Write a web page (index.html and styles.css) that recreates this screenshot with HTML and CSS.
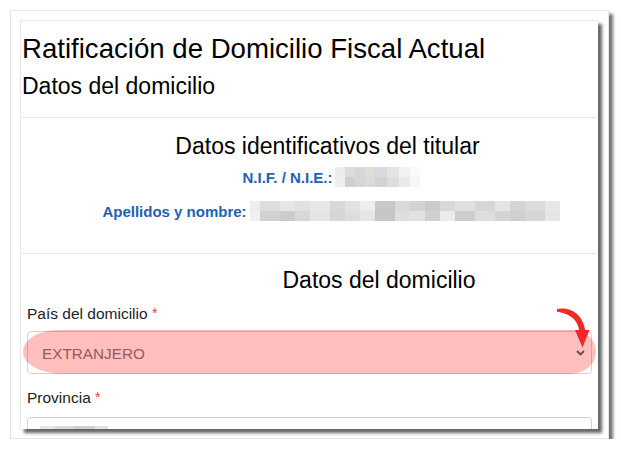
FILE: index.html
```html
<!DOCTYPE html>
<html lang="es">
<head>
<meta charset="utf-8">
<title>Ratificación de Domicilio Fiscal Actual</title>
<link rel="stylesheet" href="styles.css">
</head>
<body>
<div class="frame">
  <div class="panel">
    <header class="head">
      <h1 class="title">Ratificación de Domicilio Fiscal Actual</h1>
      <h2 class="subtitle">Datos del domicilio</h2>
    </header>
    <section class="ident">
      <h3 class="section-title">Datos identificativos del titular</h3>
      <p class="id-line"><span class="id-label">N.I.F. / N.I.E.:</span><span class="blur blur-nif"></span></p>
      <p class="id-line id-line-2"><span class="id-label">Apellidos y nombre:</span><span class="blur blur-name"></span></p>
    </section>
    <section class="address">
      <h3 class="section-title address-title">Datos del domicilio</h3>
      <div class="field">
        <label class="field-label">País del domicilio <span class="req">*</span></label>
        <div class="select">
          <span class="select-value">EXTRANJERO</span>
          <svg class="chevron" width="9" height="6" viewBox="0 0 9 6"><path d="M1 1 L4.5 4.5 L8 1" fill="none" stroke="#555" stroke-width="1.8"/></svg>
        </div>
      </div>
      <div class="field field-2">
        <label class="field-label">Provincia <span class="req">*</span></label>
        <div class="select select-2">
          <span class="blur blur-prov"></span>
        </div>
      </div>
    </section>
    <div class="highlight"></div>
    <svg class="arrow" width="40" height="46" viewBox="0 0 40 46">
      <path d="M2 4 C12 1.5 28 6 30.5 27 L24.5 27 C23 13 13 8.5 2 6.8 Z" fill="#f02828"/>
      <path d="M20 25 L34.5 25 L27.5 42.5 Z" fill="#f02828"/>
    </svg>
  </div>
</div>
</body>
</html>
```

FILE: styles.css
```css
* { box-sizing: border-box; }

body {
  margin: 0;
  background: #ffffff;
  font-family: "Liberation Sans", Arial, sans-serif;
  color: #000;
}

.frame {
  margin: 10px 0 0 10px;
  width: 599px;
  height: 429px;
  background: #fff;
  border: 1px solid #e6e6e6;
  padding: 9px 10px 10px 9px;
  box-shadow: 4px 4px 3px rgba(0, 0, 0, 0.55);
}

.panel {
  position: relative;
  width: 578px;
  height: 409px;
  background: #fff;
  border-top: 1px solid #e8e8e8;
  border-left: 1px solid #e8e8e8;
  box-shadow: 4px 4px 3px rgba(0, 0, 0, 0.6);
  overflow: hidden;
}

.head {
  margin: 0 1px;
  padding: 12.5px 0 17.3px 0;
  border-bottom: 1px solid #e5e5e5;
}

.title {
  margin: 0;
  font-size: 27.6px;
  font-weight: normal;
  line-height: 1.1;
}

.subtitle {
  margin: 10.5px 0 0 0;
  font-size: 23px;
  font-weight: normal;
  line-height: 1.1;
}

.ident {
  margin: 0 1px;
  padding: 16.4px 0 29.2px 36px;
  border-bottom: 1px solid #e5e5e5;
  text-align: center;
}

.section-title {
  margin: 0;
  font-size: 23px;
  font-weight: normal;
  line-height: 1.1;
}

.id-line {
  margin: 7.4px 0 0 0;
  padding-left: 7px;
  font-size: 15px;
  line-height: 22px;
  white-space: nowrap;
}

.id-line-2 { margin-top: 12.4px; }

.id-label {
  font-weight: bold;
  color: #1d62b5;
}

.blur {
  display: inline-block;
  height: 20px;
  vertical-align: -4px;
  margin-left: 2px;
  background-repeat: no-repeat;
  background-size: 100% 50%, 100% 50%;
  background-position: top left, bottom left;
}

.blur-nif {
  width: 85px;
  background-image:
    linear-gradient(90deg, #ececec 0 10px, #dcdcdc 10px 20px, #d4d8da 20px 30px, #e0dcd8 30px 40px, #d8d8de 40px 52px, #e4e4e4 52px 64px, #f2f2f2 64px 75px, #fafafa 75px 85px),
    linear-gradient(90deg, #eeeeee 0 10px, #cfcfcf 10px 20px, #d6d6d6 20px 30px, #dadada 30px 40px, #d2d2d6 40px 52px, #dedede 52px 64px, #eaeaea 64px 75px, #f6f6f6 75px 85px);
}

.blur-name {
  width: 310px;
  margin-left: 3px;
  background-image:
    linear-gradient(90deg, #eeeeee 0 10px, #dedede 10px 30px, #e6e6e6 30px 45px, #dde2e6 45px 60px, #e8e8e8 60px 80px, #d8d8d8 80px 95px, #e2e2e2 95px 110px, #eeeeee 110px 125px, #c8c8c8 125px 145px, #dadad6 145px 160px, #d2d2d8 160px 175px, #cbcbcb 175px 190px, #d8d8d8 190px 205px, #e0e0e0 205px 225px, #d6d6d6 225px 245px, #e4e4e4 245px 260px, #d2d6d2 260px 275px, #dcdcdc 275px 295px, #e8e8e8 295px 310px),
    linear-gradient(90deg, #f0f0f0 0 10px, #d2d2d2 10px 30px, #cccccc 30px 45px, #d8d8d8 45px 60px, #e4e4e4 60px 80px, #d6d6d6 80px 95px, #dddddd 95px 110px, #e6e6e6 110px 125px, #c6c6c6 125px 145px, #dedede 145px 160px, #e2e2e2 160px 175px, #d0d0d0 175px 190px, #ececec 190px 205px, #cdcdcd 205px 225px, #dedede 225px 245px, #d4d4d4 245px 260px, #cfcfcf 260px 275px, #d6d6d6 275px 295px, #e6e6e6 295px 310px);
}

.address {
  padding: 14.7px 6px 0 6px;
}

.address-title {
  padding-left: 139px;
  text-align: center;
}

.field {
  margin-top: 10.1px;
}

.field-2 {
  margin-top: 14.3px;
}

.field-label {
  display: block;
  font-size: 15.5px;
  line-height: 20px;
  color: #222;
}

.req {
  color: #e0403c;
  font-size: 14px;
  position: relative;
  top: -1px;
}

.select {
  display: flex;
  align-items: center;
  justify-content: space-between;
  margin-top: 7px;
  height: 43px;
  border: 1px solid #d2d2d2;
  border-radius: 4px;
  padding: 2px 6px 0 14px;
}

.select-2 {
  margin-top: 8.6px;
  align-items: flex-start;
  padding: 8px 6px 0 12px;
}

.select-value {
  font-size: 15.3px;
  line-height: 39px;
  color: #777;
}

.chevron {
  display: block;
}

.blur-prov {
  width: 68px;
  height: 10px;
  margin: 0;
  background-image:
    linear-gradient(90deg, #e6e6e6 0 15px, #d8d8d8 15px 35px, #cfcfcf 35px 55px, #e2e2e2 55px 68px),
    linear-gradient(90deg, #eeeeee 0 15px, #e0e0e0 15px 35px, #d8d8d8 35px 55px, #eaeaea 55px 68px);
}

.highlight {
  position: absolute;
  left: 2px;
  top: 309px;
  width: 573px;
  height: 44px;
  background: rgba(255, 0, 0, 0.25);
  border-radius: 34px 22px 26px 40px / 22px 22px 22px 22px;
}

.arrow {
  position: absolute;
  left: 534px;
  top: 284px;
}
```
